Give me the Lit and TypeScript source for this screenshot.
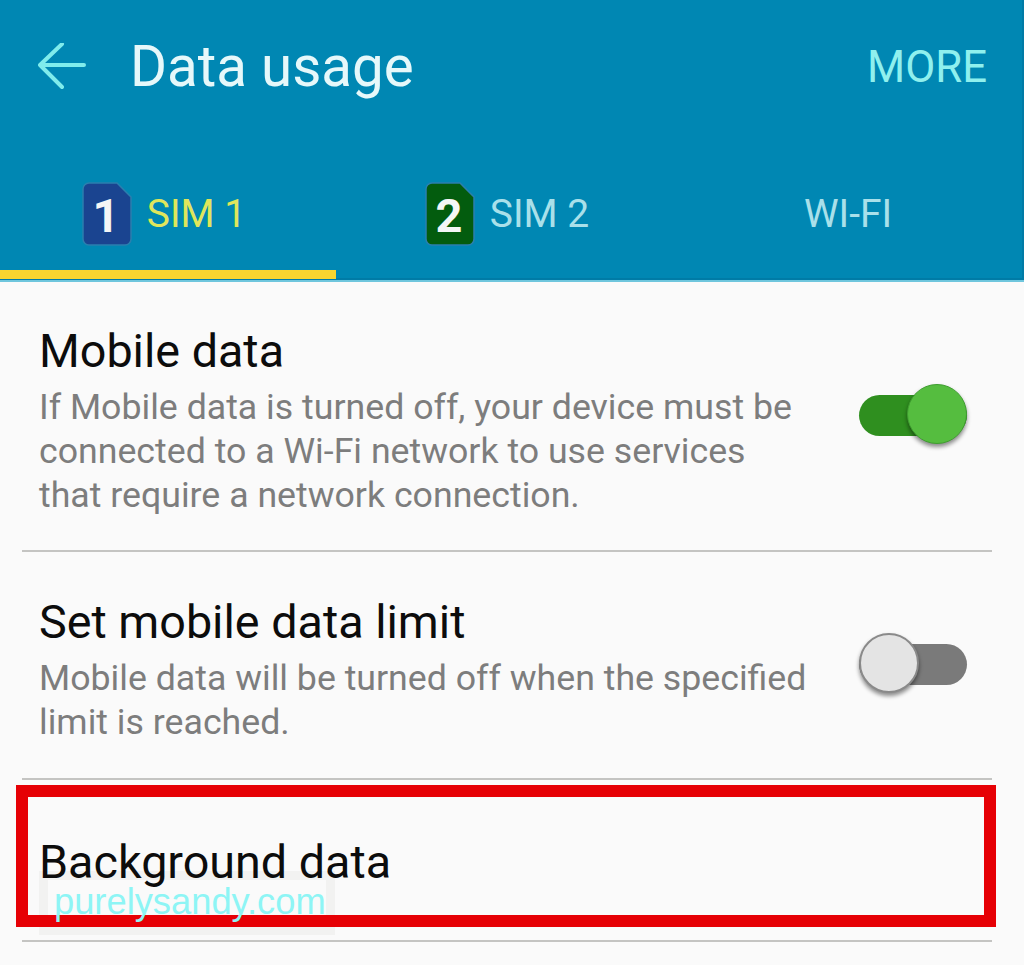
import { LitElement, html, css } from "lit";
import { customElement } from "lit/decorators.js";

@customElement("app-root")
export class AppRoot extends LitElement {
  static styles = css`
    :host { display: block; position: relative; width: 1024px; height: 965px; overflow: hidden; background: #fafafa; font-family: Roboto, "Liberation Sans", sans-serif; }
    header { height: 280px; background: #0087b3; border-bottom: 2px solid #6fc6dd; box-shadow: inset 0 -2px 0 #007ba6, inset -2px 0 0 #007ba6; display: flex; flex-direction: column; box-sizing: content-box; }
    .top { display: flex; align-items: center; height: 134px; padding: 0 37px 0 38px; }
    .back { width: 48px; height: 48px; flex: none; }
    .title { margin-left: 44px; font-size: 56.5px; color: #e6f8fa; flex: 1; }
    .more { font-size: 43.7px; color: #8ff0ee; }
    .tabs { display: grid; grid-template-columns: 336px 342px 346px; height: 146px; }
    .tab { display: flex; align-items: center; justify-content: center; gap: 15px; height: 136px; padding-top: 24px; font-size: 39px; color: #a9e0ea; box-sizing: border-box; }
    .tab.on { color: #dfe65c; border-bottom: 9px solid #f8d530; height: 145px; padding-right: 8px; }
    .tab.wifi { padding-right: 6px; }
    .tab svg { flex: none; }
    .row { display: flex; align-items: center; padding: 0 57px 0 0; margin-left: 39px; }
    .text { flex: 1; min-width: 0; padding-top: 10px; }
    .name { font-size: 46.7px; line-height: 52px; color: #0c0c0c; }
    .desc { font-size: 35.7px; line-height: 44px; color: #7d7d7d; margin-top: 8px; }
    .r1 { height: 268px; }
    .r2 { height: 226px; }
    .r3 { height: 160px; align-items: flex-start; padding-top: 56px; box-sizing: border-box; position: relative; z-index: 1; }
    .rule { height: 2px; margin: 0 32px 0 22px; background: #c4c4c2; }
    .sw { width: 108px; height: 62px; position: relative; flex: none; margin-bottom: 3px; }
    .sw .track { position: absolute; left: 0; right: 0; top: 11px; height: 41px; border-radius: 21px; }
    .sw .knob { position: absolute; top: 0; width: 60px; height: 60px; border-radius: 50%; box-shadow: 0 3px 4px rgba(0,0,0,.45); box-sizing: border-box; }
    .sw.on .track { background: #2f8f1f; }
    .sw.on .knob { right: 0; background: #55bd3f; border: 1px solid #3f9e30; }
    .sw.off .track { background: #7a7a7a; }
    .sw.off .knob { left: 0; background: #e4e4e4; border: 2px solid #8a8a8a; }
    .wmbox { position: absolute; left: 39px; top: 871px; width: 296px; height: 64px; border: 9px solid #f2f2f1; box-sizing: border-box; }
    .mark { position: absolute; left: 16px; top: 785px; width: 980px; height: 142px; border: 12px solid #e60005; box-sizing: border-box; z-index: 2; }
    .wm { position: absolute; left: 54px; top: 882px; font-family: "Liberation Sans", sans-serif; font-size: 36.3px; line-height: 40px; color: #8ef5f5; z-index: 3; }
  `;

  private sim(fill: string, n: string) {
    return html`<svg width="50" height="64" viewBox="0 0 50 64">
      <path d="M7 1H35L49 15V57a6 6 0 0 1-6 6H7a6 6 0 0 1-6-6V7a6 6 0 0 1 6-6Z" fill=${fill} stroke="#2b7fae" stroke-width="1.5"/>
      <text x="24" y="50" text-anchor="middle" font-family="Roboto, sans-serif" font-weight="700" font-size="47" fill="#f4f6f6">${n}</text>
    </svg>`;
  }

  render() {
    return html`
      <header>
        <div class="top">
          <svg class="back" viewBox="0 0 48 48" fill="none" stroke="#7fecec" stroke-width="4" stroke-linecap="round" stroke-linejoin="round"><path d="M2 22H46M24 1L2 22L24 44"/></svg>
          <div class="title">Data usage</div>
          <div class="more">MORE</div>
        </div>
        <div class="tabs">
          <div class="tab on">${this.sim("#1a4490", "1")}<span>SIM 1</span></div>
          <div class="tab">${this.sim("#035c0e", "2")}<span>SIM 2</span></div>
          <div class="tab wifi"><span>WI-FI</span></div>
        </div>
      </header>
      <div class="row r1">
        <div class="text">
          <div class="name">Mobile data</div>
          <div class="desc">If Mobile data is turned off, your device must be<br>connected to a Wi-Fi network to use services<br>that require a network connection.</div>
        </div>
        <div class="sw on"><div class="track"></div><div class="knob"></div></div>
      </div>
      <div class="rule"></div>
      <div class="row r2">
        <div class="text">
          <div class="name">Set mobile data limit</div>
          <div class="desc">Mobile data will be turned off when the specified<br>limit is reached.</div>
        </div>
        <div class="sw off"><div class="track"></div><div class="knob"></div></div>
      </div>
      <div class="rule"></div>
      <div class="row r3"><div class="name">Background data</div></div>
      <div class="rule"></div>
      <div class="wmbox"></div>
      <div class="mark"></div>
      <div class="wm">purelysandy.com</div>
    `;
  }
}
